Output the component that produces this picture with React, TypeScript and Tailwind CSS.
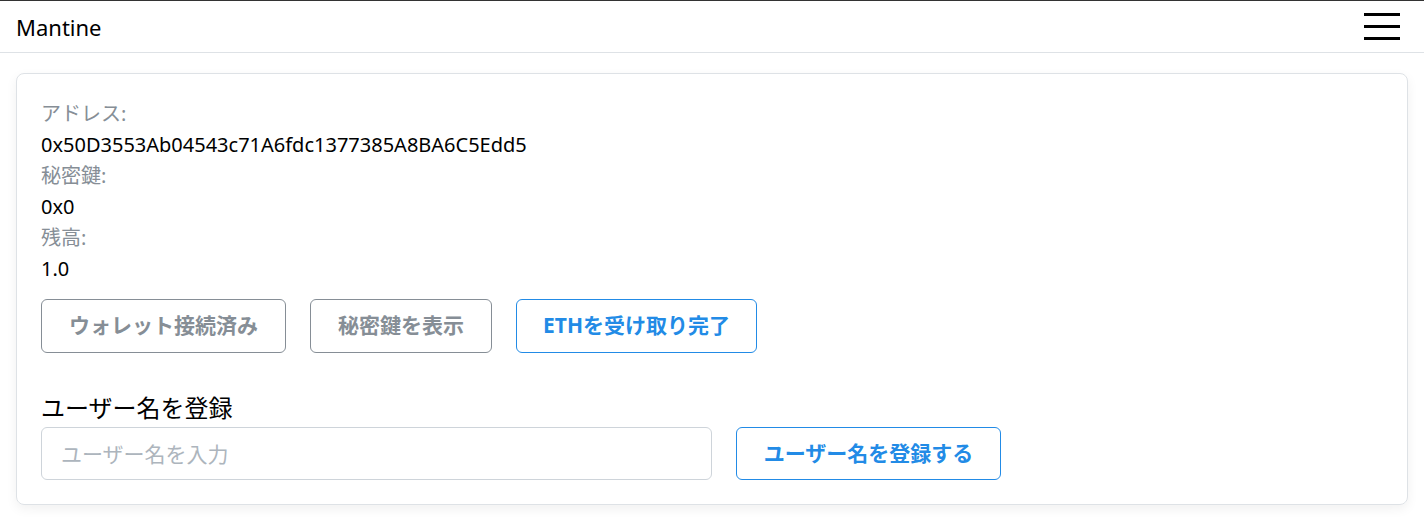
import React from "react";

const font = { fontFamily: '"Noto Sans", "Noto Sans CJK JP", sans-serif' };

const rows = [
  { label: "アドレス:", value: "0x50D3553Ab04543c71A6fdc1377385A8BA6C5Edd5" },
  { label: "秘密鍵:", value: "0x0" },
  { label: "残高:", value: "1.0" },
];

const App = () => {
  return (
    <div className="min-h-[521px] bg-white text-black" style={font}>
      <header className="h-[53px] border-t border-[#333] border-b border-b-[#dee2e6] flex items-center justify-between pl-4 pr-6">
        <span className="text-[22px] leading-none">Mantine</span>
        <button className="flex flex-col gap-[9px] w-9">
          <span className="h-[3px] bg-black block"></span>
          <span className="h-[3px] bg-black block"></span>
          <span className="h-[3px] bg-black block"></span>
        </button>
      </header>

      <main className="px-4 pt-5">
        <div className="border border-[#dee2e6] rounded-lg shadow-[0_4px_12px_rgba(0,0,0,0.06)] p-6">
          {rows.map((row) => (
            <div key={row.label}>
              <p className="text-[20px] leading-[31px] text-[#868e96]">{row.label}</p>
              <p className="text-[20px] leading-[31px]">{row.value}</p>
            </div>
          ))}

          <div className="flex items-center gap-6 mt-[15px]">
            <button className="w-[245px] h-[54px] border border-[#868e96] rounded-md text-[21px] font-bold text-[#868e96]">
              ウォレット接続済み
            </button>
            <button className="w-[182px] h-[54px] border border-[#868e96] rounded-md text-[21px] font-bold text-[#868e96]">
              秘密鍵を表示
            </button>
            <button className="w-[241px] h-[54px] border border-[#228be6] rounded-md text-[21px] font-bold text-[#228be6]">
              ETHを受け取り完了
            </button>
          </div>

          <h3 className="text-[24px] leading-[34px] mt-[38px]">ユーザー名を登録</h3>
          <div className="flex items-center gap-6 mt-[2px]">
            <input
              className="w-[671px] h-[53px] border border-[#ced4da] rounded-md px-[19px] text-[21px] placeholder:text-[#adb5bd] outline-none"
              placeholder="ユーザー名を入力"
            />
            <button className="w-[265px] h-[53px] border border-[#228be6] rounded-md text-[21px] font-bold text-[#228be6]">
              ユーザー名を登録する
            </button>
          </div>
        </div>
      </main>
    </div>
  );
};

export default App;
